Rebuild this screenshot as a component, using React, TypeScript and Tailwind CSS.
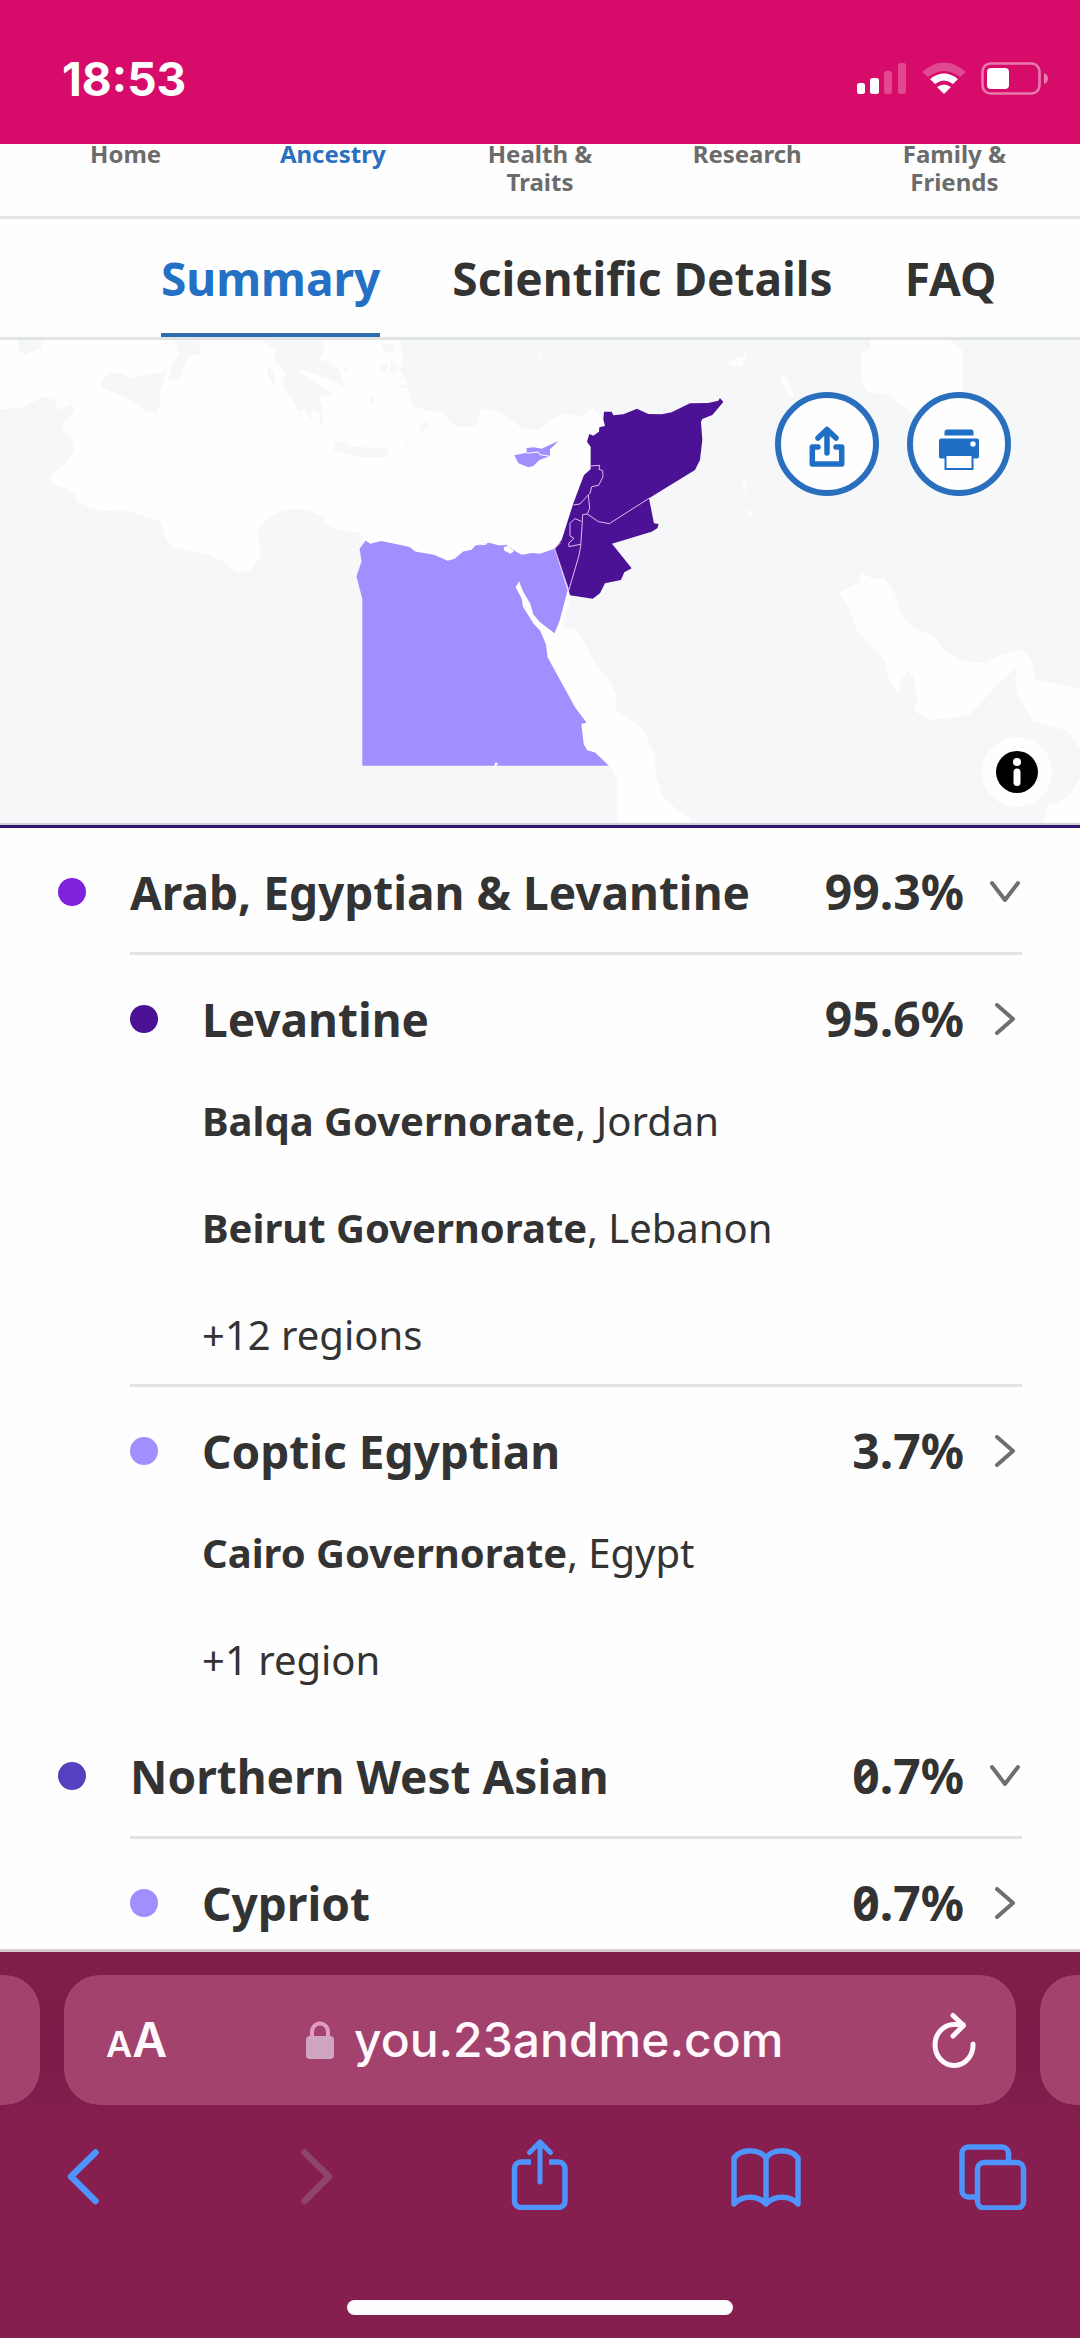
import React from 'react';

type Region = { name: string; country?: string };

type Population = {
  name: string;
  percent: string;
  dot: string;
  regions: Region[];
  more?: string;
};

type Group = {
  name: string;
  percent: string;
  dot: string;
  populations: Population[];
};

const navItems = [
  { label: 'Home' },
  { label: 'Ancestry', active: true },
  { label: 'Health & Traits' },
  { label: 'Research' },
  { label: 'Family & Friends' },
];

const tabs = [
  { label: 'Summary', active: true },
  { label: 'Scientific Details' },
  { label: 'FAQ' },
];

const groups: Group[] = [
  {
    name: 'Arab, Egyptian & Levantine',
    percent: '99.3%',
    dot: 'bg-[#7f22dc]',
    populations: [
      {
        name: 'Levantine',
        percent: '95.6%',
        dot: 'bg-[#4b1295]',
        regions: [
          { name: 'Balqa Governorate', country: 'Jordan' },
          { name: 'Beirut Governorate', country: 'Lebanon' },
        ],
        more: '+12 regions',
      },
      {
        name: 'Coptic Egyptian',
        percent: '3.7%',
        dot: 'bg-[#a18eff]',
        regions: [{ name: 'Cairo Governorate', country: 'Egypt' }],
        more: '+1 region',
      },
    ],
  },
  {
    name: 'Northern West Asian',
    percent: '0.7%',
    dot: 'bg-[#5540c0]',
    populations: [
      { name: 'Cypriot', percent: '0.7%', dot: 'bg-[#a18eff]', regions: [] },
    ],
  },
];

const StatusBar: React.FC = () => (
  <header className="relative z-10 flex h-36 shrink-0 items-start justify-between bg-[#d60b6a] pt-[52px] pr-[31px] pl-[62px] text-white">
    <time className="font-['Inter',sans-serif] text-[46px] leading-[54px] font-bold">18:53</time>
    <svg viewBox="0 0 192 33" className="mt-[10px] h-[33px] w-[192px]" fill="currentColor" aria-hidden="true">
      <rect x="0" y="21" width="8" height="11" rx="2.5" />
      <rect x="13" y="16" width="9" height="16" rx="2.5" />
      <g opacity=".25">
        <rect x="27" y="9" width="8" height="23" rx="2.5" />
        <rect x="41" y="1" width="8" height="31" rx="2.5" />
      </g>
      <path opacity=".25" d="M65 10Q87 -9 109 10L103 15Q87 3 71 15Z" />
      <path d="M73 17Q87 6 101 17L96 22Q87 15 78 22Z" />
      <path d="M80 25Q87 20 94 25L87 32Z" />
      <rect x="125.5" y="1.5" width="57" height="30" rx="8" fill="none" stroke="#fff" strokeOpacity=".45" strokeWidth="2.6" />
      <rect x="130" y="6" width="22" height="21" rx="4" />
      <path opacity=".45" d="M187 11q4 1.500 4 5.500t-4 5.500Z" />
    </svg>
  </header>
);

const SiteNav: React.FC = () => (
  <nav className="-mt-1 grid h-[79px] grid-cols-5 border-b-[3px] border-[#e1e4e5] px-[22px] text-center">
    {navItems.map((item) => (
      <a
        key={item.label}
        href="#"
        className={`px-8 text-[24px] leading-7 font-bold ${item.active ? 'text-[#2a6fc0]' : 'text-[#6b6b6b]'}`}
      >
        {item.label}
      </a>
    ))}
  </nav>
);

const Tabs: React.FC = () => (
  <nav className="flex gap-[72px] border-b-[3px] border-[#e1e4e5] pl-[161px]">
    {tabs.map((tab) => (
      <a
        key={tab.label}
        href="#"
        className={`border-b-4 pt-[29px] pb-[25px] text-[46px] leading-[60px] font-bold whitespace-nowrap ${
          tab.active ? 'border-[#2f6cad] text-[#2370c4]' : 'border-transparent'
        }`}
      >
        {tab.label}
      </a>
    ))}
  </nav>
);

const AncestryMap: React.FC = () => (
  <section className="relative border-b-2 border-[#cfcfd9] bg-[#f6f7f9]">
    <svg viewBox="0 340 1080 483" className="block h-auto w-full" role="img" aria-label="Map of ancestry locations">
      {/* seas and coastline, western half */}
      <g transform="translate(0 330) scale(.3444 .334)">
        <path
          fill="#fefefe"
          d="M0 30V238L60 232 130 200 160 210 165 240 210 222 215 240 180 285 185 300 215 335 215 365 190 400 150 435 150 460 190 475 215 490 225 515 260 530 300 543 360 538 400 550 465 575 480 620 500 650 560 662 600 670 650 695 690 727 730 718 755 680 757 650 745 610Q775 535 870 535L910 545 942 560V582L1000 603 1045 605 1060 640 1300 710 1568 690 1612 655 1640 620 1665 525 1700 430 1720 400 1710 320 1740 300 1752 270 1725 240 1700 252 1680 258 1640 250 1598 270 1568 298H1520L1490 275Q1440 230 1395 240L1385 285 1340 291 1310 280 1290 250 1240 242 1195 225 1185 180 1180 150 1160 120 1170 90 1160 30Z"
        />
        <path fill="#fefefe" d="M1725 300 1725 235 1700 245 1722 262ZM1550 50 1568 90 1575 95 1560 60Z" />
        <path
          fill="#fefefe"
          d="M1500 745 1568 870 1610 908 1648 780 1656 797 1645 850 1632 890 1670 895 1690 925 1730 1000 1770 1050 1788 1090 1790 1140 1830 1165 1870 1200 1900 1270 1905 1340 1925 1400 1960 1430 2005 1460 2008 1480H1797L1790 1420 1795 1360 1780 1320 1768 1305 1690 1300 1600 1100 1480 780Z"
        />
        <g fill="#f6f7f9">
          <path d="M50 30H120V55L70 75 55 60Z" />
          <path d="M505 30H580V70L545 80 520 150 490 145 500 100 520 75Z" />
          <path d="M295 150 320 130 350 128 380 143 485 125 465 180 465 220 455 250 420 240 390 215 295 172Z" />
          <path d="M760 30H930L945 60 925 85 950 95 985 120 1000 170 960 150 880 120 870 125 965 190 925 200 940 240 930 250 905 240V270L885 235 868 245 845 200 820 160 830 130 795 90 800 60Z" />
          <path d="M970 335H1000L1010 350 1100 352 1130 358 1125 380H1050L970 362Z" />
          <path d="M1218 300 1225 280 1248 270 1240 295 1222 305Z" />
          <path d="M1105 45 1145 40 1145 62 1120 66ZM1105 100 1125 105 1120 130 1105 125ZM1135 90 1160 115 1135 130Z" />
          <path d="M780 110 795 130 800 165 785 150 775 125ZM925 240 938 262 935 290 927 270ZM408 305H420V315ZM1180 320 1187 330 1180 345Z" />
          <path d="M1015 72H1030V80ZM1075 190 1085 210 1078 225ZM1110 180 1128 178 1118 186ZM1160 165 1182 165 1165 175ZM990 105 1010 120 1000 125Z" />
        </g>
      </g>
      {/* seas and lakes, eastern half */}
      <g transform="translate(540 330) scale(.3444 .334)" fill="#fefefe">
        <path d="M960 30H1190L1225 60 1230 250H1100L1080 245 1040 220 1020 195 950 185 935 150 932 70 958 55Z" />
        <path d="M540 100 560 88 603 73 585 110ZM700 135 715 140 738 200 725 205 705 165ZM581 430 598 460 600 500ZM603 530 620 555 606 555Z" />
        <path d="M870 785 900 770 930 755 935 725 965 745 1000 745 1030 790 1045 840 1080 890 1140 915 1180 965 1230 990 1290 998 1345 970 1395 955 1425 985 1438 1045 1500 1060 1570 1075V1255L1530 1200 1430 1170 1395 1110 1380 1060 1385 1010 1330 1060 1250 1150 1200 1160 1130 1168 1085 1140 1095 1110 1085 1040 1065 1020 1048 1050 1040 1095 1010 1040 1000 985 960 945 920 900 895 830Z" />
        <path d="M1570 1340 1540 1390 1500 1420 1475 1420 1462 1480H1570Z" />
      </g>
      {/* Egypt */}
      <g transform="translate(0 330) scale(.3444 .334)">
        <path
          fill="#a18eff"
          d="M1062 630 1075 640 1107 632 1190 650 1205 663 1260 673 1300 691 1320 685 1345 663 1370 658 1380 645 1420 637 1450 645 1470 643 1500 665 1515 673 1545 668 1568 670 1610 655 1648 780 1625 870 1610 908 1568 875 1548 850 1540 820 1520 785 1507 752 1497 770 1515 805 1518 828 1550 880 1568 900 1585 940 1590 980 1670 1130 1703 1175 1688 1180 1695 1240 1705 1258 1728 1265 1768 1305H1052V805L1035 738 1050 692 1044 655Z"
        />
        <path fill="#fefefe" d="M1462 650 1475 647 1493 662 1482 670 1464 660ZM1385 645 1415 637 1412 643ZM1430 1320 1438 1295 1446 1297 1434 1320Z" />
      </g>
      {/* Cyprus and the Levant */}
      <g transform="translate(500 380) scale(.3333)">
        <path fill="#a18eff" d="M43 226 80 218 80 204 102 202 125 206 176 182 150 208 150 228 118 240 100 258 85 262 55 250Z" />
        <path fill="none" stroke="#fff" strokeWidth="3" d="M80 220 115 216 120 224 150 229" />
        <path
          fill="#4b1295"
          d="M312 95 335 95 340 106 370 103 411 86 445 102 485 103 515 97 570 70 625 69 655 62 660 54 670 66 637 105 607 117 603 125 607 180 600 240 585 270 447 355 462 430 476 432 472 445 455 455 336 491 395 565 373 577 363 600 315 610 300 640 278 656 210 646 206 630 164 506 185 480 220 370 252 285 272 268 272 200 261 185 268 162 280 167 297 155 298 142 315 138 310 118Z"
        />
        <g fill="none" stroke="#e9b8f2" strokeWidth="3">
          <path d="M272 258 299 256 297 268 308 272 309 290 296 316 275 320 270 340 262 348 240 372 220 375" />
          <path d="M265 345 269 385 262 402 248 404 246 440 242 500 236 530 206 632" />
          <path d="M262 402 295 425 328 431 447 355" />
          <path d="M244 424 225 416 210 430 210 468 222 475 206 490 207 500 242 493" />
          <path d="M182 488 164 506 206 630" />
        </g>
      </g>
    </svg>

    <div className="absolute top-[52px] right-[69px] flex gap-7">
      <button aria-label="Share" className="h-[104px] w-[104px] rounded-full border-[6px] border-[#2a6fbe] bg-[#fefefe]">
        <svg viewBox="-46 -46 92 92" fill="none" stroke="#1f6fc6" strokeWidth="5.500" strokeLinecap="round" strokeLinejoin="round">
          <path d="M0 9V-13M-9 -6 0 -14.500 9 -6" />
          <path d="M-9 3H-14.700V20H14.700V3H9" />
        </svg>
      </button>
      <button aria-label="Print" className="h-[104px] w-[104px] rounded-full border-[6px] border-[#2a6fbe] bg-[#fefefe]">
        <svg viewBox="-46 -46 92 92" fill="#1f6fc6">
          <path d="M-14.500 -8.500V-12Q-14.500 -14.500 -12 -14.500H12Q14.500 -14.500 14.500 -12V-8.500Z" />
          <rect x="-20" y="-5.500" width="40" height="20" rx="2" />
          <circle cx="14" cy="0" r="2.700" fill="#fff" />
          <rect x="-13.500" y="11" width="27" height="14" fill="#fff" stroke="#1f6fc6" strokeWidth="2" />
        </svg>
      </button>
    </div>

    <button aria-label="Map information" className="absolute right-7 bottom-4 h-[70px] w-[70px] rounded-full bg-[#fefefe]">
      <svg viewBox="-35 -35 70 70">
        <circle r="21" fill="#000" />
        <circle cy="-10" r="4" fill="#fff" />
        <rect x="-3.500" y="-3.500" width="7" height="17.500" rx="3.500" fill="#fff" />
      </svg>
    </button>
  </section>
);

const Chevron: React.FC<{ open?: boolean }> = ({ open }) => (
  <svg
    viewBox="0 0 32 32"
    className="ml-[26px] h-8 w-8 shrink-0"
    fill="none"
    stroke="#6f6f6f"
    strokeWidth="4"
    strokeLinecap="round"
    strokeLinejoin="round"
    aria-hidden="true"
  >
    <path d={open ? 'M2 7 15 24 28 7' : 'M7 2 23 16 7 30'} />
  </svg>
);

const Row: React.FC<{ name: string; percent: string; dot: string; open?: boolean }> = ({ name, percent, dot, open }) => (
  <button
    className="flex w-full items-center pt-[34px] text-left text-[46px] leading-[60px] font-bold whitespace-nowrap"
    aria-expanded={open}
  >
    <span className={`mr-11 h-7 w-7 shrink-0 rounded-full ${dot}`} />
    <span className="flex-1">{name}</span>
    <span className="text-[48px] leading-[60px] slashed-zero">{percent}</span>
    <Chevron open={open} />
  </button>
);

const PopulationItem: React.FC<{ population: Population }> = ({ population }) => (
  <li className="border-b-[3px] border-[#e2e2e2] pb-[22px] last:border-transparent">
    <Row name={population.name} percent={population.percent} dot={population.dot} />
    {population.regions.length > 0 && (
      <ul className="mt-[45px] flex flex-col gap-[53px] pl-[72px] text-[40px] leading-[54px]">
        {population.regions.map((r) => (
          <li key={r.name}>
            <strong>{r.name}</strong>, {r.country}
          </li>
        ))}
        <li>{population.more}</li>
      </ul>
    )}
  </li>
);

const BrowserBar: React.FC = () => (
  <footer className="shrink-0 border-t-[3px] border-[#d9cdd3] bg-[#861f4f] pb-[23px]">
    <div className="flex gap-6 overflow-hidden bg-linear-to-b from-[#80204a] via-[#7b1c48] to-[#861f4f] pt-[23px] pb-[33px]">
      <div className="h-[130px] w-10 shrink-0 rounded-r-[36px] bg-[#a3426c]" />
      <div className="relative flex h-[130px] flex-1 items-center justify-between rounded-[36px] bg-[#a3426c] pr-[38px] pl-[42px] font-['Inter',sans-serif] text-[#fff8fd]">
        <button aria-label="Page settings" className="flex items-baseline font-semibold">
          <span className="text-[36px]">A</span>
          <span className="text-[48px]">A</span>
        </button>
        <div className="absolute left-1/2 flex -translate-x-1/2 items-center gap-5 pl-3">
          <svg viewBox="0 0 28 38" className="h-[38px] w-7 shrink-0" aria-hidden="true">
            <path fill="none" stroke="#e39bc6" strokeWidth="4" d="M6 17V11a8 8.500 0 0 1 16 0V17" />
            <rect y="15" width="28" height="23" rx="4" fill="#cfa5c1" />
          </svg>
          <input
            aria-label="Address"
            defaultValue="you.23andme.com"
            className="w-[432px] bg-transparent text-[48px] leading-[60px] font-medium outline-none"
          />
        </div>
        <button aria-label="Reload">
          <svg viewBox="0 0 48 56" className="h-14 w-12" fill="none" stroke="currentColor" strokeWidth="5" strokeLinecap="round" strokeLinejoin="round">
            <path d="M43 32a19 20.500 0 1 1 -19 -19.500H33M23 3.500 33.500 13.500 23 24" />
          </svg>
        </button>
      </div>
      <div className="h-[130px] w-10 shrink-0 rounded-l-[36px] bg-[#a3426c]" />
    </div>
    <div className="flex justify-between px-[52px] text-[#4f94fc]">
      <button aria-label="Back">
        <svg viewBox="0 0 72 72" className="h-[72px] w-[72px]" fill="none" stroke="currentColor" strokeWidth="6.500" strokeLinecap="round" strokeLinejoin="round">
          <path d="M43.500 14.500 19 38.500 43.500 63" />
        </svg>
      </button>
      <button aria-label="Forward" className="text-[#8d4569]">
        <svg viewBox="0 0 72 72" className="h-[72px] w-[72px]" fill="none" stroke="currentColor" strokeWidth="6.500" strokeLinecap="round" strokeLinejoin="round">
          <path d="M26.500 14.500 51 38.500 26.500 63" />
        </svg>
      </button>
      <button aria-label="Share page">
        <svg viewBox="0 0 72 72" className="h-[72px] w-[72px]" fill="none" stroke="currentColor" strokeWidth="5.500">
          <path d="M27 24H17a6.500 6.500 0 0 0 -6.500 6.500V63A6.500 6.500 0 0 0 17 69.500H54.500A6.500 6.500 0 0 0 61 63V30.500A6.500 6.500 0 0 0 54.500 24H45" />
          <path strokeWidth="5" strokeLinecap="round" strokeLinejoin="round" d="M36 44V4.500M25.500 14.500 36 4 46.500 14.500" />
        </svg>
      </button>
      <button aria-label="Bookmarks">
        <svg viewBox="0 0 72 72" className="h-[72px] w-[72px]" fill="none" stroke="currentColor" strokeWidth="5.500" strokeLinejoin="round">
          <path d="M36 20C30 11 12 10 4 20V66C12 57 28 57 36 66C44 57 60 57 68 66V20C60 10 42 11 36 20V66" />
        </svg>
      </button>
      <button aria-label="Tabs">
        <svg viewBox="0 0 72 72" className="h-[72px] w-[72px]" fill="none" stroke="currentColor" strokeWidth="5.500">
          <path d="M20 59H12.500A6.500 6.500 0 0 1 6 52.500V15.500A6.500 6.500 0 0 1 12.500 9H46A6.500 6.500 0 0 1 52.500 15.500V24" />
          <rect x="21.500" y="24.500" width="46" height="45.500" rx="6.500" />
        </svg>
      </button>
    </div>
    <div className="mx-auto mt-[90px] h-[15px] w-[386px] rounded-full bg-[#fdfdfd]" />
  </footer>
);

const App: React.FC = () => (
  <div className="flex h-screen flex-col overflow-hidden bg-[#fefefe] font-['Noto_Sans',sans-serif] text-[#333333]">
    <StatusBar />
    <main className="min-h-0 flex-1">
      <SiteNav />
      <Tabs />
      <AncestryMap />
      <section className="border-t-[3px] border-[#35146f] px-[58px]">
        {groups.map((group) => (
          <div key={group.name}>
            <Row name={group.name} percent={group.percent} dot={group.dot} open />
            <ul className="mt-[30px] ml-[72px] border-t-[3px] border-[#e2e2e2]">
              {group.populations.map((p) => (
                <PopulationItem key={p.name} population={p} />
              ))}
            </ul>
          </div>
        ))}
      </section>
    </main>
    <BrowserBar />
  </div>
);

export default App;
